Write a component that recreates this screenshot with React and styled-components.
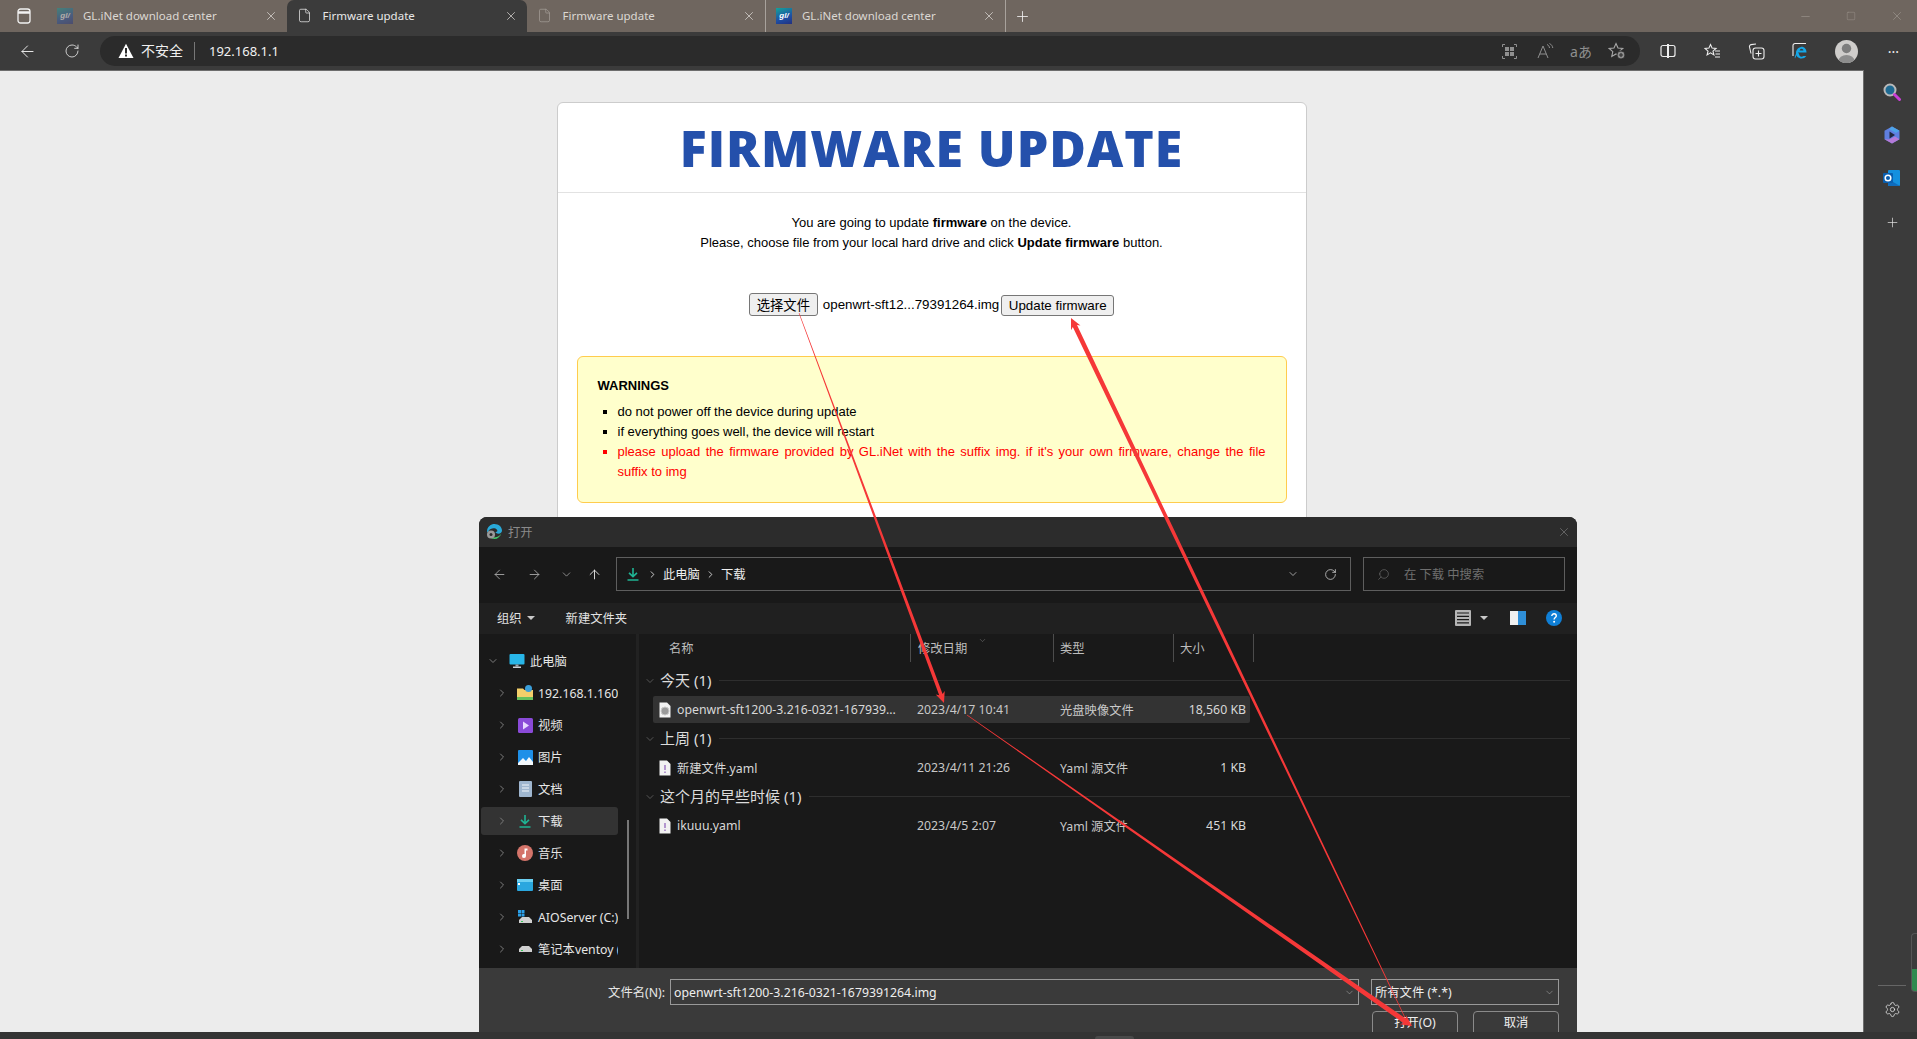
import React from 'react';
import styled, { createGlobalStyle } from 'styled-components';
import { ArrowLeft, ArrowRight, ArrowUp, ChevronDown, ChevronRight, File, Minus, Plus, RotateCw, Search, Settings, Square, X } from 'lucide-react';

const UI_FONT = '"Noto Sans", "Noto Sans CJK SC", sans-serif';
const PAGE_FONT = '"Liberation Sans", "Noto Sans CJK SC", sans-serif';

const GlobalStyle = createGlobalStyle`
  html, body {
    margin: 0;
    height: 100%;
    overflow: hidden;
    background: #333;
    font-family: ${UI_FONT};
  }
  * { box-sizing: border-box; }
`;

const TABS = [
  { title: 'GL.iNet download center', icon: 'gli', dim: true },
  { title: 'Firmware update', icon: 'doc', active: true },
  { title: 'Firmware update', icon: 'doc', dim: true, sep: true },
  { title: 'GL.iNet download center', icon: 'gli', sep: true },
];

const NAV = [
  { label: '此电脑', icon: 'pc', root: true },
  { label: '192.168.1.160', icon: 'net' },
  { label: '视频', icon: 'video' },
  { label: '图片', icon: 'pics' },
  { label: '文档', icon: 'docs' },
  { label: '下载', icon: 'down', selected: true },
  { label: '音乐', icon: 'music' },
  { label: '桌面', icon: 'desk' },
  { label: 'AIOServer (C:)', icon: 'sys' },
  { label: '笔记本ventoy (E:)', icon: 'drive' },
];

const GROUPS = [
  { title: '今天 (1)', file: { name: 'openwrt-sft1200-3.216-0321-167939...', date: '2023/4/17 10:41', type: '光盘映像文件', size: '18,560 KB', kind: 'disc', selected: true } },
  { title: '上周 (1)', file: { name: '新建文件.yaml', date: '2023/4/11 21:26', type: 'Yaml 源文件', size: '1 KB', kind: 'yaml' } },
  { title: '这个月的早些时候 (1)', file: { name: 'ikuuu.yaml', date: '2023/4/5 2:07', type: 'Yaml 源文件', size: '451 KB', kind: 'yaml' } },
];

const ARROWS = [
  { from: [799, 313], to: [944, 703], width: 3.6 },
  { from: [967, 715], to: [1412, 1026], width: 5 },
  { from: [1409, 1026], to: [1071, 318], width: 4.6 },
];

const Shell = styled.div`
  position: relative;
  display: flex;
  flex-direction: column;
  height: 100vh;
  overflow: hidden;
`;

const TabStrip = styled.div`
  display: flex;
  align-items: stretch;
  height: 32px;
  background: #6f665f;
  color: #e4e0dc;
`;

const TabToggle = styled.div`
  width: 47px;
  display: flex;
  align-items: center;
  justify-content: center;
  color: #f2f2f2;
`;

const Tab = styled.div`
  width: ${p => (p.$active ? 240 : 239.5)}px;
  display: flex;
  align-items: center;
  padding: 0 9px 1px 10px;
  font-size: 11.5px;
  background: ${p => (p.$active ? '#3b3b3b' : 'transparent')};
  border-radius: ${p => (p.$active ? '7px 7px 0 0' : '0')};
  border-right: ${p => (p.$sep ? '1px solid #a8a29c' : 'none')};
  background-clip: padding-box;
`;

const TabTitle = styled.span`
  flex: 1;
  margin-left: 10px;
  white-space: nowrap;
  color: ${p => (p.$active ? '#e8e8e8' : '#dcd8d3')};
`;

const Favicon = styled.span`
  width: 16px;
  height: 16px;
  flex: none;
  display: flex;
  align-items: center;
  justify-content: center;
  background: linear-gradient(160deg, #14a39a 0%, #1d4fa5 60%, #23307f 100%);
  color: #fff;
  font: italic 700 8px ${PAGE_FONT};
  opacity: ${p => (p.$dim ? 0.45 : 1)};
`;

const TabDoc = styled.span`
  width: 16px;
  height: 16px;
  flex: none;
  display: flex;
  align-items: center;
  justify-content: center;
  color: ${p => (p.$dim ? '#a39c95' : '#e8e8e8')};
`;

const NewTab = styled.div`
  width: 34px;
  display: flex;
  align-items: center;
  justify-content: center;
  color: #eee;
`;

const WindowControls = styled.div`
  display: flex;
  margin-left: auto;
  margin-right: -3px;
  color: #a59e97;
`;

const WindowButton = styled.div`
  width: 46px;
  display: flex;
  align-items: center;
  justify-content: center;
`;

const Toolbar = styled.div`
  display: flex;
  align-items: center;
  height: 38px;
  background: #3b3b3b;
  color: #eee;
`;

const ToolIcon = styled.div`
  width: ${p => p.$w || 44}px;
  height: 30px;
  flex: none;
  margin-left: ${p => p.$ml || 0}px;
  display: flex;
  align-items: center;
  justify-content: center;
  position: relative;
  color: ${p => p.$color || '#eee'};
  font-size: 14px;
`;

const AddressPill = styled.div`
  flex: 1;
  height: 30px;
  display: flex;
  align-items: center;
  padding: 0 5px 0 18px;
  margin: 0 6px;
  background: #2b2b2b;
  border-radius: 15px;
`;

const SecurityLabel = styled.span`
  margin-left: 7px;
  font-size: 14px;
  color: #f0f0f0;
  padding-right: 11px;
  border-right: 1px solid #777;
  line-height: 18px;
`;

const Url = styled.span`
  margin-left: 14px;
  font-size: 13px;
  color: #f2f2f2;
  flex: 1;
`;

const Main = styled.div`
  flex: 1;
  display: flex;
  min-height: 0;
`;

const Page = styled.div`
  flex: 1;
  background: #ececec;
  border-top: 1px solid #6d6d6d;
  border-right: 1px solid #6d6d6d;
  overflow: hidden;
  font: 13px/20px ${PAGE_FONT};
  color: #000;
`;

const Card = styled.div`
  width: 750px;
  margin: 31px auto 0;
  background: #fff;
  border: 1px solid #ccc;
  border-radius: 6px 6px 0 0;
`;

const CardHeader = styled.div`
  height: 90px;
  display: flex;
  align-items: center;
  justify-content: center;
  border-bottom: 1px solid #e2e2e2;
`;

const Title = styled.h1`
  margin: 0;
  font: 800 50px/1 "Open Sans", sans-serif;
  letter-spacing: 1px;
  color: #2450ab;
`;

const CardBody = styled.div`
  padding: 20px 19px 40px;
`;

const Lead = styled.p`
  margin: 0;
  text-align: center;
`;

const FileRow = styled.div`
  display: flex;
  align-items: flex-end;
  justify-content: center;
  margin-top: 40px;
  height: 23px;
`;

const NativeButton = styled.button`
  height: ${p => p.$h}px;
  width: ${p => p.$w}px;
  padding: 0;
  background: #efefef;
  border: 1px solid #767676;
  border-radius: 3px;
  color: #000;
  font: 13.33px ${PAGE_FONT};
`;

const FileName = styled.span`
  margin: 0 2px 0 5px;
  font-size: 13.33px;
  line-height: 22px;
`;

const WarningBox = styled.div`
  margin-top: 40px;
  padding: 19px 20px 20px;
  background: #ffffcc;
  border: 1px solid #ffcc4d;
  border-radius: 6px;
`;

const WarningTitle = styled.div`
  font-weight: 700;
  margin-bottom: 6px;
`;

const WarningList = styled.ul`
  margin: 0;
  padding: 0 0 0 20px;
  list-style: square;
`;

const WarningItem = styled.li`
  color: ${p => (p.$red ? '#ff0000' : '#000')};
  text-align: justify;
`;

const SidePanel = styled.div`
  position: relative;
  width: 53px;
  flex: none;
  display: flex;
  flex-direction: column;
  align-items: center;
  padding-left: 3px;
  background: #3b3b3b;
  color: #e8e8e8;
`;

const SideIcon = styled.div`
  height: 43px;
  width: 100%;
  margin-top: ${p => p.$mt || 0}px;
  display: flex;
  align-items: center;
  justify-content: center;
`;

const SideDivider = styled.div`
  width: 28px;
  height: 1px;
  margin-top: auto;
  background: #666;
`;

const SideSettings = styled.div`
  height: 46px;
  display: flex;
  align-items: center;
  justify-content: center;
`;

const Gauge = styled.div`
  position: absolute;
  right: 0;
  top: 863px;
  width: 6px;
  height: 59px;
  border: 1px solid #555;
  border-right: none;
  border-radius: 4px 0 0 4px;
  background: linear-gradient(to bottom, #3b3b3b 0 62%, #2f8a4f 62% 100%);
`;

const BottomStrip = styled.div`
  height: 7px;
  flex: none;
  background: #343434;
  display: flex;
  padding-left: 1095px;
  align-items: flex-end;
`;

const StripTab = styled.div`
  width: 39px;
  height: 3px;
  background: #4a4a4a;
  border-radius: 3px 3px 0 0;
`;

const Dialog = styled.div`
  position: absolute;
  left: 479px;
  top: 517px;
  width: 1098px;
  height: 515px;
  display: flex;
  flex-direction: column;
  background: #191919;
  border-radius: 8px 8px 0 0;
  overflow: hidden;
  font-size: 12.3px;
  color: #e6e6e6;
`;

const DialogTitle = styled.div`
  height: 30px;
  flex: none;
  display: flex;
  align-items: center;
  padding: 0 6px 1px 7px;
  background: #2c2c2c;
  color: #8a8a8a;
`;

const DialogTitleText = styled.span`
  margin-left: 5px;
  flex: 1;
`;

const NavRow = styled.div`
  height: 56px;
  flex: none;
  display: flex;
  align-items: center;
  padding: 0 12px 2px 3px;
  background: #191919;
`;

const NavButton = styled.div`
  width: ${p => p.$w}px;
  flex: none;
  display: flex;
  justify-content: center;
  color: ${p => p.$color || '#aaa'};
`;

const PathBox = styled.div`
  flex: 1;
  height: 34px;
  display: flex;
  align-items: center;
  margin-left: 8px;
  padding-left: 9px;
  border: 1px solid #5e5e5e;
  color: #eee;
`;

const Crumb = styled.span`
  margin: 0 5px;
  white-space: nowrap;
`;

const PathActions = styled.div`
  margin-left: auto;
  display: flex;
  align-items: center;
  gap: 25px;
  padding-right: 13px;
  color: #d5d5d5;
`;

const SearchBox = styled.div`
  width: 202px;
  height: 34px;
  flex: none;
  display: flex;
  align-items: center;
  gap: 14px;
  margin-left: 12px;
  padding-left: 13px;
  border: 1px solid #5e5e5e;
  color: #6f6f6f;
`;

const CommandRow = styled.div`
  height: 31px;
  flex: none;
  display: flex;
  align-items: center;
  padding: 0 15px 1px 18px;
  background: #202020;
`;

const CommandLabel = styled.span`
  margin-right: ${p => p.$mr || 0}px;
  color: #e2e2e2;
`;

const Caret = styled.span`
  width: 0;
  height: 0;
  flex: none;
  margin-left: ${p => p.$ml || 0}px;
  margin-right: ${p => p.$mr || 0}px;
  border-left: 4px solid transparent;
  border-right: 4px solid transparent;
  border-top: 4px solid #c8c8c8;
`;

const CommandRight = styled.div`
  margin-left: auto;
  display: flex;
  align-items: center;
`;

const HelpGap = styled.span`
  width: 20px;
`;

const DialogBody = styled.div`
  flex: 1;
  min-height: 0;
  display: flex;
`;

const NavPane = styled.div`
  position: relative;
  width: 160px;
  flex: none;
  padding: 13px 0 0 2px;
  border-right: 3px solid #222;
`;

const NavItem = styled.div`
  width: 137px;
  height: 28px;
  margin-bottom: 4px;
  display: flex;
  align-items: center;
  padding-left: ${p => (p.$root ? 6 : 15)}px;
  overflow: hidden;
  white-space: nowrap;
  border-radius: 3px;
  background: ${p => (p.$selected ? '#333' : 'transparent')};
  color: #e6e6e6;
`;

const NavChevron = styled.span`
  width: 12px;
  flex: none;
  display: flex;
  justify-content: center;
  color: #7c7c7c;
`;

const NavGlyph = styled.span`
  width: 16px;
  height: 16px;
  flex: none;
  margin: 0 5px 0 ${p => (p.$root ? 10 : 9)}px;
  display: flex;
  align-items: center;
  justify-content: center;
`;

const NavScroll = styled.div`
  position: absolute;
  left: 148px;
  top: 186px;
  width: 2px;
  height: 99px;
  background: #777;
`;

const ListPane = styled.div`
  flex: 1;
  min-width: 0;
  padding-right: 7px;
`;

const ColumnHeader = styled.div`
  display: grid;
  grid-template-columns: 258px 143px 120px 80px;
  height: 28px;
  margin: 0 0 5px 14px;
  color: #bdbdbd;
`;

const ColumnCell = styled.div`
  position: relative;
  display: flex;
  align-items: center;
  padding-left: ${p => p.$pl || 6}px;
  border-right: 1px solid #4c4c4c;
`;

const SortMark = styled.span`
  position: absolute;
  top: -2px;
  left: 67px;
  color: #888;
`;

const GroupHeader = styled.div`
  height: 29px;
  display: flex;
  align-items: center;
  padding: 0 0 2px 5px;
  font-size: 15px;
  color: #dcdcdc;
`;

const GroupLabel = styled.span`
  margin: -2px 0 0 4px;
  white-space: nowrap;
`;

const GroupLine = styled.span`
  flex: 1;
  height: 1px;
  margin-left: 8px;
  background: #2e2e2e;
`;

const FileItem = styled.div`
  display: grid;
  grid-template-columns: 258px 143px 120px 72px;
  align-items: center;
  width: 597px;
  height: 27px;
  margin: 0 0 2px 14px;
  background: ${p => (p.$selected ? '#333' : 'transparent')};
  border-radius: 2px;
  color: #d8d8d8;
`;

const FileCell = styled.div`
  display: flex;
  align-items: center;
  gap: 6px;
  padding-left: ${p => p.$pl || 6}px;
  white-space: nowrap;
  color: ${p => p.$color || 'inherit'};
`;

const SizeCell = styled.div`
  text-align: right;
  white-space: nowrap;
`;

const DialogFooter = styled.div`
  height: 64px;
  flex: none;
  padding-top: 11px;
  background: #3a3a3a;
  overflow: hidden;
`;

const FooterRow = styled.div`
  display: flex;
  align-items: center;
  padding-right: 18px;
`;

const FooterLabel = styled.span`
  width: 187px;
  margin-right: 5px;
  text-align: right;
  color: #e6e6e6;
`;

const FooterField = styled.div`
  width: ${p => p.$w}px;
  height: 26px;
  flex: none;
  display: flex;
  align-items: center;
  justify-content: space-between;
  margin-left: ${p => p.$ml || 0}px;
  padding: 0 3px;
  border: 1px solid #999;
  color: #eee;
`;

const FooterActions = styled.div`
  display: flex;
  justify-content: flex-end;
  gap: 15px;
  margin-top: 6px;
  padding-right: 18px;
`;

const FooterButton = styled.div`
  width: 86px;
  height: 32px;
  display: flex;
  align-items: center;
  justify-content: center;
  padding-bottom: 10px;
  border: 1px solid #8a8a8a;
  border-radius: 4px;
  color: #eee;
`;

const Annotations = styled.svg`
  position: absolute;
  inset: 0;
  width: 100%;
  height: 100%;
  pointer-events: none;
`;

function arrowPoints({ from, to, width }) {
  const dx = to[0] - from[0];
  const dy = to[1] - from[1];
  const len = Math.hypot(dx, dy);
  const ux = dx / len;
  const uy = dy / len;
  const nx = -uy;
  const ny = ux;
  const at = (dist, off) => [to[0] - ux * dist + nx * off, to[1] - uy * dist + ny * off];
  const pts = [
    [from[0] + nx * 0.3, from[1] + ny * 0.3],
    at(9, width / 2),
    at(11, width / 2 + 3),
    to,
    at(11, -width / 2 - 3),
    at(9, -width / 2),
    [from[0] - nx * 0.3, from[1] - ny * 0.3],
  ];
  return pts.map(p => p.map(v => v.toFixed(1)).join(',')).join(' ');
}

const SidebarToggleIcon = () => (
  <svg width="14" height="16" viewBox="0 0 14 16" fill="none" stroke="currentColor" strokeWidth="1.3">
    <rect x="1" y="1" width="12" height="14" rx="2.5" />
    <path d="M1 4.500h12" strokeWidth="2.500" />
  </svg>
);

const SplitIcon = () => (
  <svg width="16" height="16" viewBox="0 0 16 16" fill="none" stroke="currentColor" strokeWidth="1.2">
    <rect x="1" y="2.500" width="14" height="11" rx="2" />
    <path d="M8 1v14" strokeWidth="2" />
  </svg>
);

const FavListIcon = () => (
  <svg width="17" height="17" viewBox="0 0 17 17" fill="none" stroke="currentColor" strokeWidth="1.1">
    <path d="M6.500 1.500l1.600 3.600 3.900.4-3 2.600.9 3.800-3.400-2-3.400 2 .9-3.800-3-2.600 3.900-.4z" />
    <path d="M11 8h5M11.500 11h4.500M11 14h5" />
  </svg>
);

const CollectionIcon = () => (
  <svg width="17" height="17" viewBox="0 0 17 17" fill="none" stroke="currentColor" strokeWidth="1.1">
    <path d="M3 10.500L1.500 4a2 2 0 0 1 1.500-2.400L8 1" />
    <rect x="5" y="5" width="11" height="11" rx="2.500" />
    <path d="M10.500 7.500v6M7.500 10.500h6" />
  </svg>
);

const IeIcon = () => (
  <svg width="18" height="18" viewBox="0 0 18 18" fill="none">
    <path d="M2 14V3.500A2 2 0 0 1 4 1.500h11" stroke="#eee" strokeWidth="1.100" />
    <path d="M6 10.500h9.500C15.500 7 13.500 5 10.800 5 7.600 5 5 7.800 5 11c0 3.200 2.400 5.500 5.500 5.500 2 0 3.700-.8 4.800-2.500h-3c-.5.5-1.100.7-1.800.7-1.500 0-2.500-1.200-2.500-3.200zm2.400-2c.2-1 .9-1.700 2-1.700s1.900.7 2 1.700z" fill="#15a7e8" />
    <path d="M4 16.500C3 15 6 8 12 3.500c-3.500 4-6 9-8 13z" fill="#15a7e8" />
  </svg>
);

const Avatar = () => (
  <svg width="23" height="23" viewBox="0 0 23 23">
    <defs>
      <clipPath id="avatar-clip"><circle cx="11.500" cy="11.500" r="11.500" /></clipPath>
    </defs>
    <g clipPath="url(#avatar-clip)">
      <rect width="23" height="23" fill="#cfcdcb" />
      <circle cx="11.500" cy="8.500" r="4.700" fill="#7d7d7d" />
      <ellipse cx="11.500" cy="21" rx="8" ry="6" fill="#8d8d8d" />
    </g>
  </svg>
);

const ImmersiveIcon = () => (
  <svg width="15" height="15" viewBox="0 0 15 15" fill="none" stroke="#8f8f8f" strokeWidth="1">
    <path d="M.5 3V.5H3M12 .5h2.500V3M14.500 12v2.500H12M3 14.500H.5V12" />
    <g fill="#8f8f8f" stroke="none">
      <rect x="3" y="3" width="4" height="4" />
      <rect x="8" y="3" width="4" height="4" />
      <rect x="3" y="8" width="4" height="4" />
      <rect x="8" y="8" width="4" height="4" />
    </g>
  </svg>
);

const ReadAloudIcon = () => (
  <svg width="17" height="16" viewBox="0 0 17 16" fill="none" stroke="#8f8f8f" strokeWidth="1">
    <path d="M1 15L6 3l5 12M2.800 11h6.400" />
    <path d="M10 1.500c1.500.6 2.300 1.800 2.500 3.500M12.500 .5c1.800.9 3 2.500 3.300 4.500" />
  </svg>
);

const FavAddIcon = () => (
  <svg width="18" height="18" viewBox="0 0 18 18" fill="none" stroke="#a8a8a8" strokeWidth="1.100">
    <path d="M8 1.500l2 4.500 4.800.5-3.600 3.200 1 4.800L8 12l-4.200 2.500 1-4.800L1.200 6.500 6 6z" />
    <circle cx="13" cy="13" r="4" fill="#8f8f8f" stroke="#2b2b2b" />
    <path d="M13 11v4M11 13h4" stroke="#2b2b2b" />
  </svg>
);

const WarningGlyph = () => (
  <svg width="16" height="16" viewBox="0 0 16 16">
    <path d="M8 .8L15.500 15H.5z" fill="#fff" />
    <rect x="7" y="5" width="2" height="5.500" fill="#2b2b2b" />
    <rect x="7" y="11.500" width="2" height="2" fill="#2b2b2b" />
  </svg>
);

const SearchColor = () => (
  <svg width="18" height="18" viewBox="0 0 18 18">
    <circle cx="7" cy="7" r="5.500" fill="#1e6a92" stroke="#b9b9b9" strokeWidth="2" />
    <path d="M11.500 11.500l5 5" stroke="#c93fd8" strokeWidth="3" strokeLinecap="round" />
  </svg>
);

const CopilotIcon = () => (
  <svg width="18" height="18" viewBox="0 0 18 18">
    <path d="M9 .5l7.500 4.300v8.400L9 17.500 1.500 13.200V4.800z" fill="#5f7fe0" />
    <path d="M9 .5l7.500 4.300L13 7 6 3z" fill="#4ea3e8" />
    <path d="M1.500 13.200L9 17.500l7.500-4.300L12 10.500l-6 3z" fill="#b57ad8" />
    <path d="M6.500 5.500L12 9l-5.500 3.500z" fill="#23283f" />
  </svg>
);

const OutlookIcon = () => (
  <svg width="18" height="18" viewBox="0 0 18 18">
    <rect x="5" y="1" width="12" height="16" rx="1" fill="#1490df" />
    <path d="M5 10l12 7H6a1 1 0 0 1-1-1z" fill="#0f6cbd" />
    <rect x="0" y="4" width="10" height="10" rx="1" fill="#0a5fb0" />
    <circle cx="5" cy="9" r="2.800" fill="none" stroke="#fff" strokeWidth="1.500" />
  </svg>
);

const EdgeGear = () => (
  <svg width="17" height="17" viewBox="0 0 17 17">
    <path d="M1 8.500C1 3.500 5 1 8.500 1c4 0 7.500 2.800 7.500 6.500 0 2-1.500 3.200-3.500 3.200-2 0-3-1-3-1.700 2 0 2.500-1.500 1-2.800C9 4.700 4 5 2.500 8 2 9 1 10 1 8.500z" fill="#29a9d8" />
    <path d="M15.500 10.500C14 14 11.500 16 8.500 16c-2 0-3.500-1-4.500-2 3 1 8 1 11.500-3.500z" fill="#45c46a" />
    <circle cx="5" cy="11.500" r="4" fill="#9a9a9a" />
    <circle cx="5" cy="11.500" r="1.500" fill="#2c2c2c" />
  </svg>
);

const DownGlyph = ({ size = 14 }) => (
  <svg width={size} height={size} viewBox="0 0 14 14" fill="none" stroke="#1fb494" strokeWidth="1.600">
    <path d="M7 1v8M3 5.800L7 9.600l4-3.800M1.500 13h11" />
  </svg>
);

const NAV_ICONS = {
  pc: (
    <svg width="16" height="16" viewBox="0 0 16 16">
      <rect x="0.500" y="1" width="15" height="10.500" rx="1" fill="#28b6e8" />
      <rect x="6.500" y="11.500" width="3" height="2" fill="#9aa7b0" />
      <rect x="4" y="13.500" width="8" height="1.500" fill="#c9d2d8" />
    </svg>
  ),
  net: (
    <svg width="16" height="16" viewBox="0 0 16 16">
      <path d="M0 3.500h6l1.500 1.500H16v8H0z" fill="#f4cf6a" />
      <rect x="0" y="12" width="16" height="3" fill="#65bf5c" />
      <circle cx="11.500" cy="3.500" r="3.500" fill="#3a9ed8" />
    </svg>
  ),
  video: (
    <svg width="15" height="15" viewBox="0 0 15 15">
      <rect width="15" height="15" rx="1.500" fill="#8a4ad8" />
      <path d="M5 3.500L11 7.500 5 11.500z" fill="#e8d8ff" />
    </svg>
  ),
  pics: (
    <svg width="15" height="15" viewBox="0 0 15 15">
      <rect width="15" height="15" rx="1" fill="#1e90e8" />
      <path d="M0 13l5-5 3 3 3-4 4 5v3H0z" fill="#f3f8fc" />
    </svg>
  ),
  docs: (
    <svg width="13" height="16" viewBox="0 0 13 16">
      <rect width="13" height="16" rx="1" fill="#9fb6cf" />
      <path d="M3 4h7M3 7h7M3 10h7" stroke="#f2f6fa" strokeWidth="1" />
    </svg>
  ),
  down: <DownGlyph />,
  music: (
    <svg width="16" height="16" viewBox="0 0 16 16">
      <circle cx="8" cy="8" r="8" fill="#d4746a" />
      <path d="M7.500 3.500h3v2h-1.500v5.500a2 2 0 1 1-1.500-1.900z" fill="#fff" />
    </svg>
  ),
  desk: (
    <svg width="16" height="13" viewBox="0 0 16 13">
      <rect width="16" height="12" rx="1" fill="#2aa7df" />
      <rect y="0" width="16" height="3" fill="#6cd0f2" />
      <rect x="1" y="4" width="2" height="2" fill="#fff" />
    </svg>
  ),
  sys: (
    <svg width="15" height="14" viewBox="0 0 15 14">
      <rect x="0" y="0" width="3" height="3" fill="#2a9fe8" />
      <rect x="3.500" y="0" width="3" height="3" fill="#2a9fe8" />
      <rect x="0" y="3.500" width="3" height="3" fill="#2a9fe8" />
      <rect x="3.500" y="3.500" width="3" height="3" fill="#2a9fe8" />
      <path d="M1 10l3-3h7l3 3v3H1z" fill="#d0d0d0" />
      <rect x="3" y="11" width="2" height="1" fill="#39c45a" />
    </svg>
  ),
  drive: (
    <svg width="15" height="8" viewBox="0 0 15 8">
      <path d="M1 4l3-3h7l3 3v3H1z" fill="#d0d0d0" />
      <rect x="3" y="5" width="2" height="1" fill="#39c45a" />
    </svg>
  ),
};

const FileGlyph = ({ kind }) => (
  <svg width="12" height="16" viewBox="0 0 12 16">
    <path d="M.5.500h7.500l3.500 3.500v11.500H.5z" fill="#f2f2f2" />
    {kind === 'disc' ? (
      <circle cx="6" cy="9" r="4" fill="#9a9a9a" stroke="#c8c8c8" />
    ) : (
      <path d="M6 5v5M6 11.500v1.500" stroke="#8a5ab8" strokeWidth="1.200" />
    )}
  </svg>
);

const ListViewIcon = () => (
  <svg width="16" height="16" viewBox="0 0 16 16">
    <rect width="16" height="16" rx="1" fill="#b5b5b5" />
    <path d="M2 3h12M2 6.300h12M2 9.600h12M2 12.900h12" stroke="#1a1a1a" strokeWidth="1.200" />
  </svg>
);

const PaneIcon = () => (
  <svg width="16" height="14" viewBox="0 0 16 14">
    <rect width="16" height="14" fill="#f0f0f0" />
    <rect x="8" width="8" height="14" fill="#2f8fd8" />
    <rect x="4" width="4" height="14" fill="#f0f0f0" />
  </svg>
);

const HelpIcon = () => (
  <svg width="16" height="16" viewBox="0 0 16 16">
    <circle cx="8" cy="8" r="8" fill="#0f7fd6" />
    <path d="M5.800 6c0-1.300 1-2.200 2.300-2.200S10.300 4.700 10.300 6c0 1.500-2.200 1.700-2.200 3.400" fill="none" stroke="#fff" strokeWidth="1.400" />
    <circle cx="8.100" cy="11.800" r="1" fill="#fff" />
  </svg>
);

const BrowserTab = ({ tab }) => (
  <Tab $active={tab.active} $sep={tab.sep}>
    {tab.icon === 'gli'
      ? <Favicon $dim={tab.dim}>gl/</Favicon>
      : <TabDoc $dim={tab.dim}><File size={15} strokeWidth={1.2} /></TabDoc>}
    <TabTitle $active={tab.active}>{tab.title}</TabTitle>
    <X size={14} strokeWidth={1.2} />
  </Tab>
);

const NavRowItem = ({ item }) => (
  <NavItem $root={item.root} $selected={item.selected}>
    <NavChevron>
      {item.root
        ? <ChevronDown size={14} strokeWidth={2} />
        : <ChevronRight size={14} strokeWidth={2} />}
    </NavChevron>
    <NavGlyph $root={item.root}>{NAV_ICONS[item.icon]}</NavGlyph>
    {item.label}
  </NavItem>
);

const FileGroup = ({ group }) => (
  <>
    <GroupHeader>
      <ChevronDown size={12} strokeWidth={1.3} color="#777" />
      <GroupLabel>{group.title}</GroupLabel>
      <GroupLine />
    </GroupHeader>
    <FileItem $selected={group.file.selected}>
      <FileCell>
        <FileGlyph kind={group.file.kind} />
        {group.file.name}
      </FileCell>
      <FileCell $color="#c8c8c8">{group.file.date}</FileCell>
      <FileCell $color="#c8c8c8">{group.file.type}</FileCell>
      <SizeCell>{group.file.size}</SizeCell>
    </FileItem>
  </>
);

export default function App() {
  return (
    <Shell>
      <GlobalStyle />
      <TabStrip>
        <TabToggle><SidebarToggleIcon /></TabToggle>
        {TABS.map((tab, i) => <BrowserTab key={i} tab={tab} />)}
        <NewTab><Plus size={17} strokeWidth={1.2} /></NewTab>
        <WindowControls>
          <WindowButton><Minus size={13} strokeWidth={1} /></WindowButton>
          <WindowButton><Square size={10} strokeWidth={1} /></WindowButton>
          <WindowButton><X size={14} strokeWidth={1} /></WindowButton>
        </WindowControls>
      </TabStrip>

      <Toolbar>
        <ToolIcon $w={45} $ml={5}><ArrowLeft size={19} strokeWidth={1.2} /></ToolIcon>
        <ToolIcon $w={44}><RotateCw size={16} strokeWidth={1.2} /></ToolIcon>
        <AddressPill>
          <WarningGlyph />
          <SecurityLabel>不安全</SecurityLabel>
          <Url>192.168.1.1</Url>
          <ToolIcon $w={36}><ImmersiveIcon /></ToolIcon>
          <ToolIcon $w={36}><ReadAloudIcon /></ToolIcon>
          <ToolIcon $w={36} $color="#8f8f8f">aあ</ToolIcon>
          <ToolIcon $w={36}><FavAddIcon /></ToolIcon>
        </AddressPill>
        <ToolIcon><SplitIcon /></ToolIcon>
        <ToolIcon><FavListIcon /></ToolIcon>
        <ToolIcon><CollectionIcon /></ToolIcon>
        <ToolIcon><IeIcon /></ToolIcon>
        <ToolIcon $ml={2}><Avatar /></ToolIcon>
        <ToolIcon $ml={2} $w={47}>···</ToolIcon>
      </Toolbar>

      <Main>
        <Page>
          <Card>
            <CardHeader><Title>FIRMWARE UPDATE</Title></CardHeader>
            <CardBody>
              <Lead>You are going to update <b>firmware</b> on the device.</Lead>
              <Lead>Please, choose file from your local hard drive and click <b>Update firmware</b> button.</Lead>
              <FileRow>
                <NativeButton $w={69} $h={23}>选择文件</NativeButton>
                <FileName>openwrt-sft12...79391264.img</FileName>
                <NativeButton $w={113} $h={21}>Update firmware</NativeButton>
              </FileRow>
              <WarningBox>
                <WarningTitle>WARNINGS</WarningTitle>
                <WarningList>
                  <WarningItem>do not power off the device during update</WarningItem>
                  <WarningItem>if everything goes well, the device will restart</WarningItem>
                  <WarningItem $red>please upload the firmware provided by GL.iNet with the suffix img. if it's your own firmware, change the file suffix to img</WarningItem>
                </WarningList>
              </WarningBox>
            </CardBody>
          </Card>
        </Page>
        <SidePanel>
          <SideIcon><SearchColor /></SideIcon>
          <SideIcon><CopilotIcon /></SideIcon>
          <SideIcon><OutlookIcon /></SideIcon>
          <SideIcon $mt={2}><Plus size={15} strokeWidth={1.1} /></SideIcon>
          <SideDivider />
          <SideSettings><Settings size={17} strokeWidth={1.1} /></SideSettings>
          <Gauge />
        </SidePanel>
      </Main>
      <BottomStrip><StripTab /></BottomStrip>

      <Dialog>
        <DialogTitle>
          <EdgeGear />
          <DialogTitleText>打开</DialogTitleText>
          <X size={14} strokeWidth={1} />
        </DialogTitle>
        <NavRow>
          <NavButton $w={35}><ArrowLeft size={15} strokeWidth={1.4} /></NavButton>
          <NavButton $w={35}><ArrowRight size={15} strokeWidth={1.4} /></NavButton>
          <NavButton $w={28}><ChevronDown size={13} strokeWidth={1.4} /></NavButton>
          <NavButton $w={28} $color="#eee"><ArrowUp size={15} strokeWidth={1.4} /></NavButton>
          <PathBox>
            <DownGlyph />
            <ChevronRight size={11} strokeWidth={1.8} style={{ marginLeft: 7 }} />
            <Crumb>此电脑</Crumb>
            <ChevronRight size={11} strokeWidth={1.8} />
            <Crumb>下载</Crumb>
            <PathActions>
              <ChevronDown size={12} strokeWidth={1.4} />
              <RotateCw size={13} strokeWidth={1.4} />
            </PathActions>
          </PathBox>
          <SearchBox>
            <Search size={13} strokeWidth={1.2} style={{ transform: 'scaleX(-1)' }} />
            在 下载 中搜索
          </SearchBox>
        </NavRow>
        <CommandRow>
          <CommandLabel>组织</CommandLabel>
          <Caret $ml={5} $mr={31} />
          <CommandLabel>新建文件夹</CommandLabel>
          <CommandRight>
            <ListViewIcon />
            <Caret $ml={9} $mr={22} />
            <PaneIcon />
            <HelpGap />
            <HelpIcon />
          </CommandRight>
        </CommandRow>
        <DialogBody>
          <NavPane>
            {NAV.map(item => <NavRowItem key={item.label} item={item} />)}
            <NavScroll />
          </NavPane>
          <ListPane>
            <ColumnHeader>
              <ColumnCell $pl={16}>名称</ColumnCell>
              <ColumnCell $pl={7}>
                <SortMark><ChevronDown size={9} strokeWidth={1.2} /></SortMark>
                修改日期
              </ColumnCell>
              <ColumnCell>类型</ColumnCell>
              <ColumnCell>大小</ColumnCell>
            </ColumnHeader>
            {GROUPS.map(group => <FileGroup key={group.title} group={group} />)}
          </ListPane>
        </DialogBody>
        <DialogFooter>
          <FooterRow>
            <FooterLabel>文件名(N):</FooterLabel>
            <FooterField $w={689}>
              openwrt-sft1200-3.216-0321-1679391264.img
              <ChevronDown size={11} strokeWidth={1.2} color="#aaa" />
            </FooterField>
            <FooterField $w={188} $ml={12}>
              所有文件 (*.*)
              <ChevronDown size={11} strokeWidth={1.2} color="#aaa" />
            </FooterField>
          </FooterRow>
          <FooterActions>
            <FooterButton>打开(O)</FooterButton>
            <FooterButton>取消</FooterButton>
          </FooterActions>
        </DialogFooter>
      </Dialog>

      <Annotations>
        {ARROWS.map((arrow, i) => <polygon key={i} points={arrowPoints(arrow)} fill="#f53838" />)}
      </Annotations>
    </Shell>
  );
}
